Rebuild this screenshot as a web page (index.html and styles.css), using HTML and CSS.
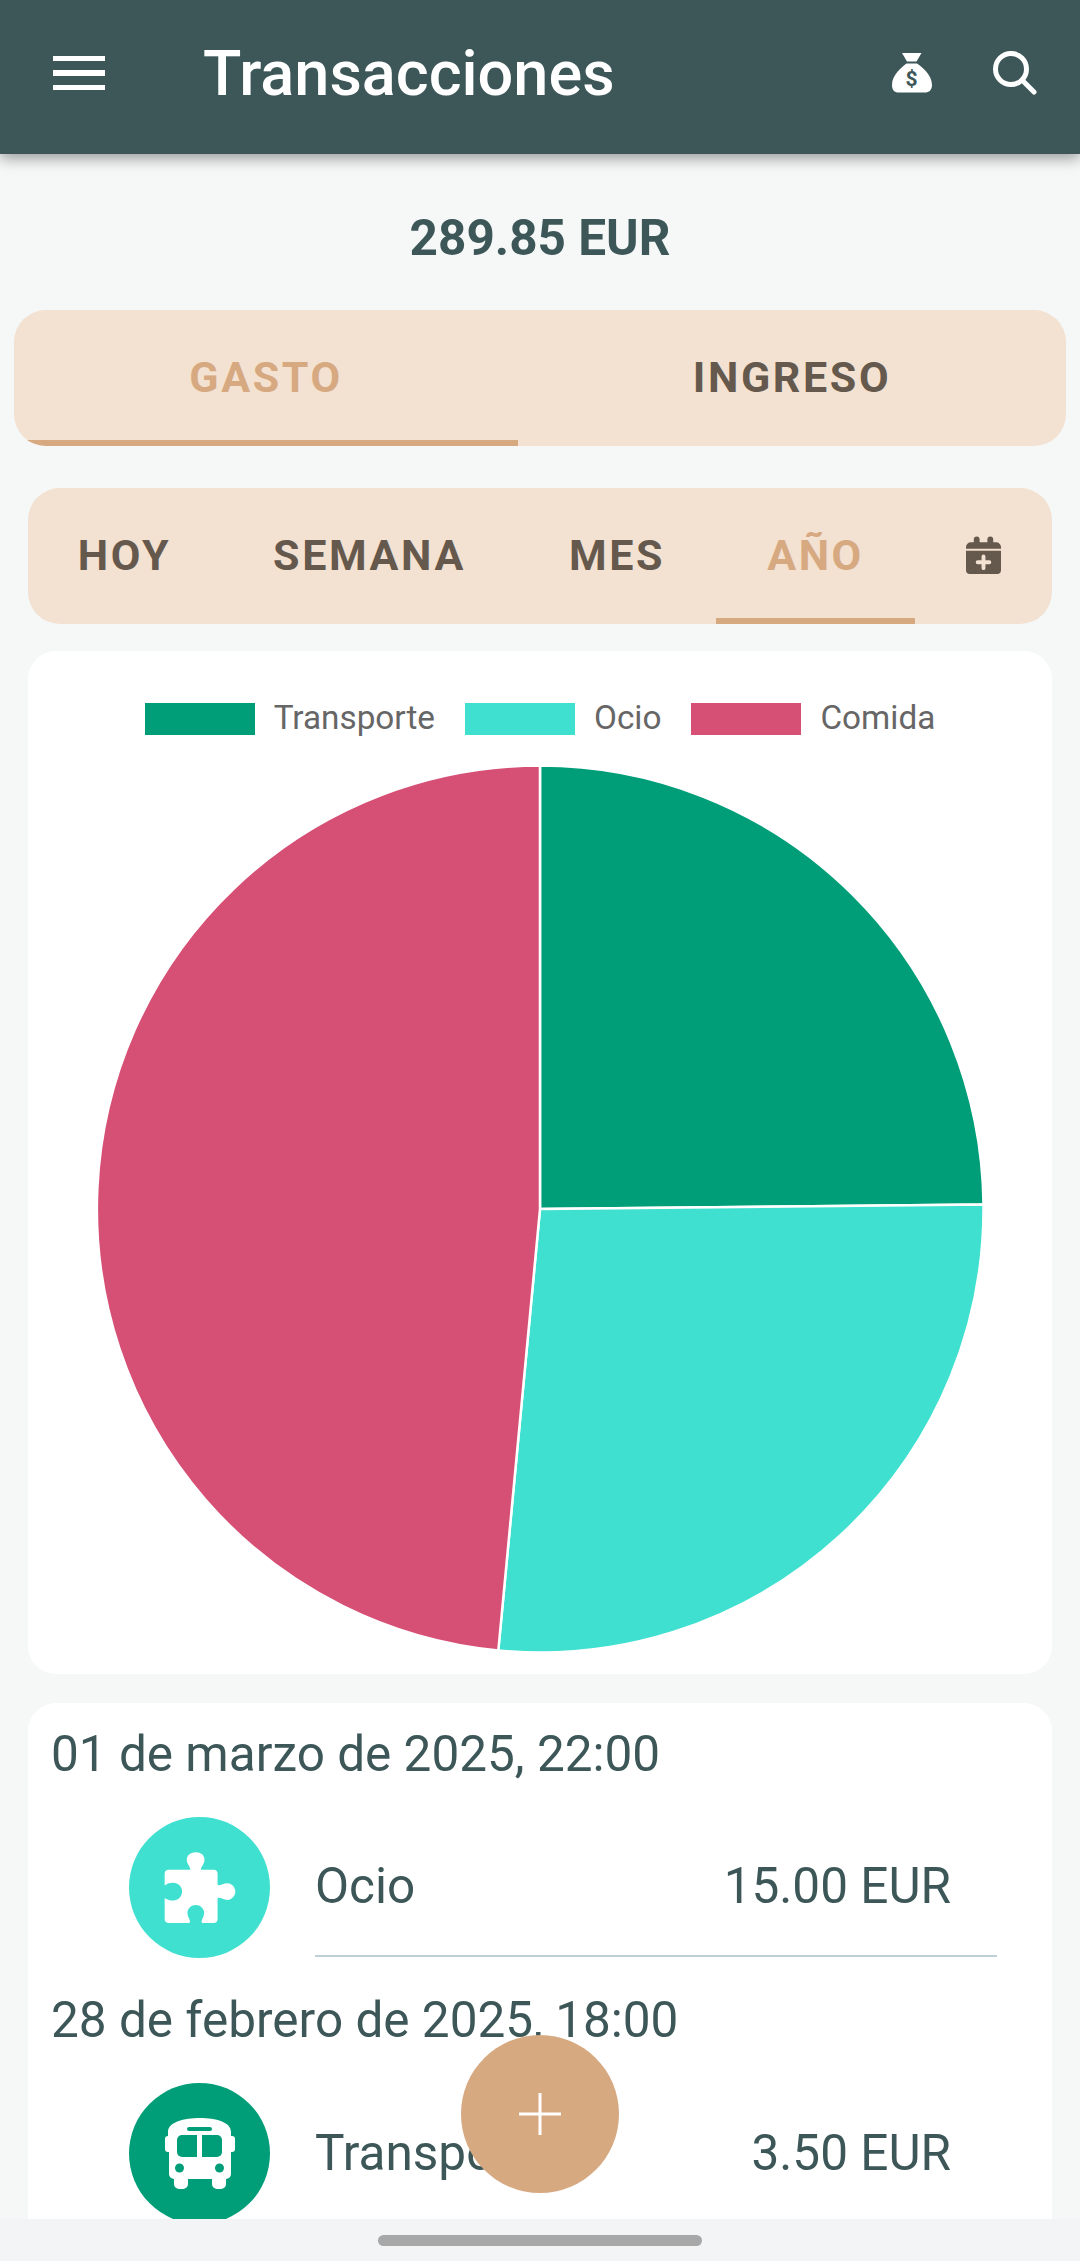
FILE: index.html
```html
<!DOCTYPE html>
<html lang="es">
<head>
    <meta charset="UTF-8">
    <meta name="viewport" content="width=device-width, initial-scale=1.0">
    <title>Transacciones</title>
    <link rel="stylesheet" href="styles.css">
</head>
<body>

<div class="screen">

    <!-- Barra superior -->
    <header class="topbar">
        <div class="menu-btn"><span></span><span></span><span></span></div>
        <h1 class="topbar-title">Transacciones</h1>
        <svg class="icon-bag" viewBox="0 0 40 40" width="40" height="40">
            <path fill="#fff" d="M10 0h19.500l-5 8.500h-9.500z"/>
            <path fill="#fff" d="M14.500 10.500h10.500c4 3 15 10.500 15 21.500c0 5-3 7.500-7 7.500h-26.500c-4 0-6.500-2.500-6.500-7.500c0-11 11-18.500 14.500-21.500z"/>
            <text class="bag-sign" x="19.500" y="33" text-anchor="middle">$</text>
        </svg>
        <svg class="icon-search" viewBox="0 0 44 44" width="44" height="44">
            <circle cx="18" cy="18" r="15.500" fill="none" stroke="#fff" stroke-width="5"/>
            <path d="M29 29l12 12" stroke="#fff" stroke-width="5" stroke-linecap="round"/>
        </svg>
    </header>

    <p class="total">289.85 EUR</p>

    <!-- Gasto / Ingreso -->
    <nav class="type-tabs">
        <div class="tab active">GASTO</div>
        <div class="tab">INGRESO</div>
    </nav>

    <!-- Periodo -->
    <nav class="period-tabs">
        <div class="tab">HOY</div>
        <div class="tab">SEMANA</div>
        <div class="tab">MES</div>
        <div class="tab active">AÑO</div>
        <div class="tab">
            <svg viewBox="0 0 36 39" width="35" height="38">
                <path fill="#65594d" d="M8 3.500a3 3 0 0 1 6 0v3h8v-3a3 3 0 0 1 6 0v3h3a5 5 0 0 1 5 5v1.500h-36v-1.500a5 5 0 0 1 5-5h3z"/>
                <path fill="#65594d" d="M0 15h36v20a4 4 0 0 1-4 4h-28a4 4 0 0 1-4-4z"/>
                <path stroke="#f3e1d2" stroke-width="4" stroke-linecap="round" d="M18 21v12M12 27h12"/>
            </svg>
        </div>
    </nav>

    <!-- Grafico -->
    <section class="card chart-card">
        <div class="legend">
            <div class="legend-item"><span class="swatch swatch-green"></span>Transporte</div>
            <div class="legend-item"><span class="swatch swatch-cyan"></span>Ocio</div>
            <div class="legend-item"><span class="swatch swatch-pink"></span>Comida</div>
        </div>
        <svg class="pie" viewBox="-446 -446 892 892" width="892" height="892">
            <g stroke="#fff" stroke-width="2.500" stroke-linejoin="round">
                <path fill="#009e78" d="M0 0V-443.500A443.500 443.500 0 0 1 443.500 -4.600z"/>
                <path fill="#40e0d0" d="M0 0L443.500 -4.600A443.500 443.500 0 0 1 -41.700 441.500z"/>
                <path fill="#d65076" d="M0 0L-41.700 441.500A443.500 443.500 0 0 1 0 -443.500z"/>
            </g>
        </svg>
    </section>

    <!-- Lista de transacciones -->
    <section class="card list-card">
        <div class="tx-date">01 de marzo de 2025, 22:00</div>
        <div class="tx-row">
            <div class="tx-icon tx-icon-cyan">
                <svg viewBox="190 185 215 215" width="72" height="72">
                    <path fill="#fff" d="M205 238H268C272 232 258 222 258 208C258 195 270 186 285 186C300 186 311 195 311 208C311 222 297 232 301 238H338Q350 238 350 250V283C356 288 366 278 380 278C392 278 403 290 403 303C403 316 392 328 380 328C366 328 356 318 350 323V385Q350 397 338 397H304C298 390 310 380 310 367C310 353 298 343 285 343C272 343 260 353 260 367C260 380 272 390 266 397H205Q192 397 192 385V322C198 326 205 330 218 330C232 330 244 318 244 303C244 288 232 277 218 277C205 277 198 281 192 285V250Q192 238 205 238Z"/>
                </svg>
            </div>
            <div class="tx-body tx-line">
                <span>Ocio</span>
                <span>15.00 EUR</span>
            </div>
        </div>
        <div class="tx-date">28 de febrero de 2025, 18:00</div>
        <div class="tx-row">
            <div class="tx-icon tx-icon-green">
                <svg viewBox="0 0 72 71" width="72" height="71">
                    <path fill="#fff" d="M4 18V14C4 4 20 0 36 0s31 4 31 14v4h1a3 3 0 0 1 3 3v10a3 3 0 0 1-3 3h-1v22a5 5 0 0 1-5 5v5a5 5 0 0 1-5 5h-4a5 5 0 0 1-5-5v-5h-24v5a5 5 0 0 1-5 5h-4a5 5 0 0 1-5-5v-5a5 5 0 0 1-5-5v-22h-1a3 3 0 0 1-3-3v-10a3 3 0 0 1 3-3z"/>
                    <g fill="#009e78">
                        <rect x="23" y="9" width="25" height="4" rx="2"/>
                        <path d="M18 17h15v22h-15a5 5 0 0 1-5-5v-12a5 5 0 0 1 5-5z"/>
                        <path d="M38 17h15a5 5 0 0 1 5 5v12a5 5 0 0 1-5 5h-15z"/>
                        <circle cx="15.500" cy="50" r="4.500"/>
                        <circle cx="55.500" cy="50" r="4.500"/>
                    </g>
                </svg>
            </div>
            <div class="tx-body">
                <span>Transporte</span>
                <span>3.50 EUR</span>
            </div>
        </div>
    </section>

    <div class="fab">
        <svg viewBox="0 0 42 42" width="42" height="42">
            <path stroke="#fff" stroke-width="3" d="M21 0v42M0 21h42"/>
        </svg>
    </div>

    <!-- Barra de navegacion del sistema -->
    <footer class="system-bar"><span class="handle"></span></footer>

</div>

</body>
</html>
```

FILE: styles.css
```css
* {
    box-sizing: border-box;
}

html, body {
    margin: 0;
    padding: 0;
}

body {
    font-family: Roboto, "Liberation Sans", sans-serif;
    color: #3d5759;
    background-color: #f6f8f8;
}

.screen {
    position: relative;
    display: flex;
    flex-direction: column;
    width: 1080px;
    height: 2261px;
    overflow: hidden;
}

/* Barra superior */
.topbar {
    position: relative;
    z-index: 2;
    flex: none;
    display: flex;
    align-items: center;
    height: 154px;
    padding: 0 43px 8px 53px;
    background-color: #3d5759;
    box-shadow: 0 4px 14px rgba(0, 0, 0, 0.4);
}

.menu-btn {
    display: flex;
    flex-direction: column;
    gap: 9px;
    width: 52px;
}

.menu-btn span {
    display: block;
    height: 5.5px;
    background-color: #fff;
}

.topbar-title {
    flex: 1;
    margin: 0 0 0 98px;
    font-size: 63px;
    font-weight: 500;
    color: #fff;
}

.icon-bag {
    margin-right: 61px;
}

.bag-sign {
    font-size: 21px;
    font-weight: 700;
    fill: #3d5759;
}

.total {
    flex: none;
    height: 156px;
    margin: 0;
    padding-top: 56px;
    text-align: center;
    font-size: 49.5px;
    line-height: 56px;
    font-weight: 700;
}

/* Pestanas */
.type-tabs, .period-tabs {
    flex: none;
    display: grid;
    height: 136px;
    overflow: hidden;
    background-color: #f3e1d2;
    border-radius: 32px;
}

.type-tabs {
    grid-template-columns: 504px 1fr;
    margin: 0 14px;
}

.period-tabs {
    grid-template-columns: 193px 297px 198px 199px 1fr;
    margin: 42px 28px 0;
}

.tab {
    display: flex;
    align-items: center;
    justify-content: center;
    padding-top: 3px;
    border-bottom: 6px solid transparent;
    font-size: 43px;
    font-weight: 700;
    letter-spacing: 2.6px;
    color: #65594d;
}

.tab.active {
    color: #d6a981;
    border-bottom-color: #d6a981;
}

.card {
    flex: none;
    margin: 27px 28px 0;
    background-color: #fff;
    border-radius: 28px;
}

/* Grafico */
.chart-card {
    display: flex;
    flex-direction: column;
    align-items: center;
    height: 1023px;
    padding-top: 52px;
}

.legend {
    display: flex;
    gap: 30px;
    height: 60px;
}

.legend-item {
    display: flex;
    align-items: flex-start;
    gap: 19px;
    font-size: 33.3px;
    line-height: 30px;
    color: #666;
}

.swatch {
    display: block;
    width: 110px;
    height: 32px;
}

.swatch-green { background-color: #009e78; }
.swatch-cyan { background-color: #40e0d0; }
.swatch-pink { background-color: #d65076; }

.pie {
    display: block;
}

/* Lista */
.list-card {
    flex: 1 1 0;
    min-height: 0;
    overflow: hidden;
    margin-top: 29px;
    margin-bottom: 0;
    padding: 0 23px;
    border-radius: 28px 28px 0 0;
}

.tx-date {
    height: 114px;
    padding-top: 23px;
    font-size: 49.5px;
    line-height: 56px;
}

.tx-row {
    display: flex;
    align-items: stretch;
    height: 140px;
    margin-bottom: 12px;
    padding-left: 78px;
}

.tx-icon {
    flex: none;
    display: flex;
    align-items: center;
    justify-content: center;
    width: 141px;
    height: 141px;
    border-radius: 50%;
}

.tx-icon-cyan { background-color: #40e0d0; }
.tx-icon-green { background-color: #009e78; }

.tx-body {
    flex: 1;
    display: flex;
    align-items: center;
    justify-content: space-between;
    margin: 0 32px 0 45px;
    padding-right: 46px;
    font-size: 49.5px;
}

.tx-line {
    border-bottom: 2px solid #bdd0d6;
}

.fab {
    position: absolute;
    left: 461px;
    top: 2035px;
    z-index: 3;
    display: flex;
    align-items: center;
    justify-content: center;
    width: 158px;
    height: 158px;
    border-radius: 50%;
    background-color: #d6a981;
}

.system-bar {
    flex: none;
    display: flex;
    justify-content: center;
    height: 42px;
    padding-top: 16px;
    background-color: #f3f4f6;
}

.handle {
    display: block;
    width: 324px;
    height: 11px;
    border-radius: 6px;
    background-color: #a8a8a8;
}
```
